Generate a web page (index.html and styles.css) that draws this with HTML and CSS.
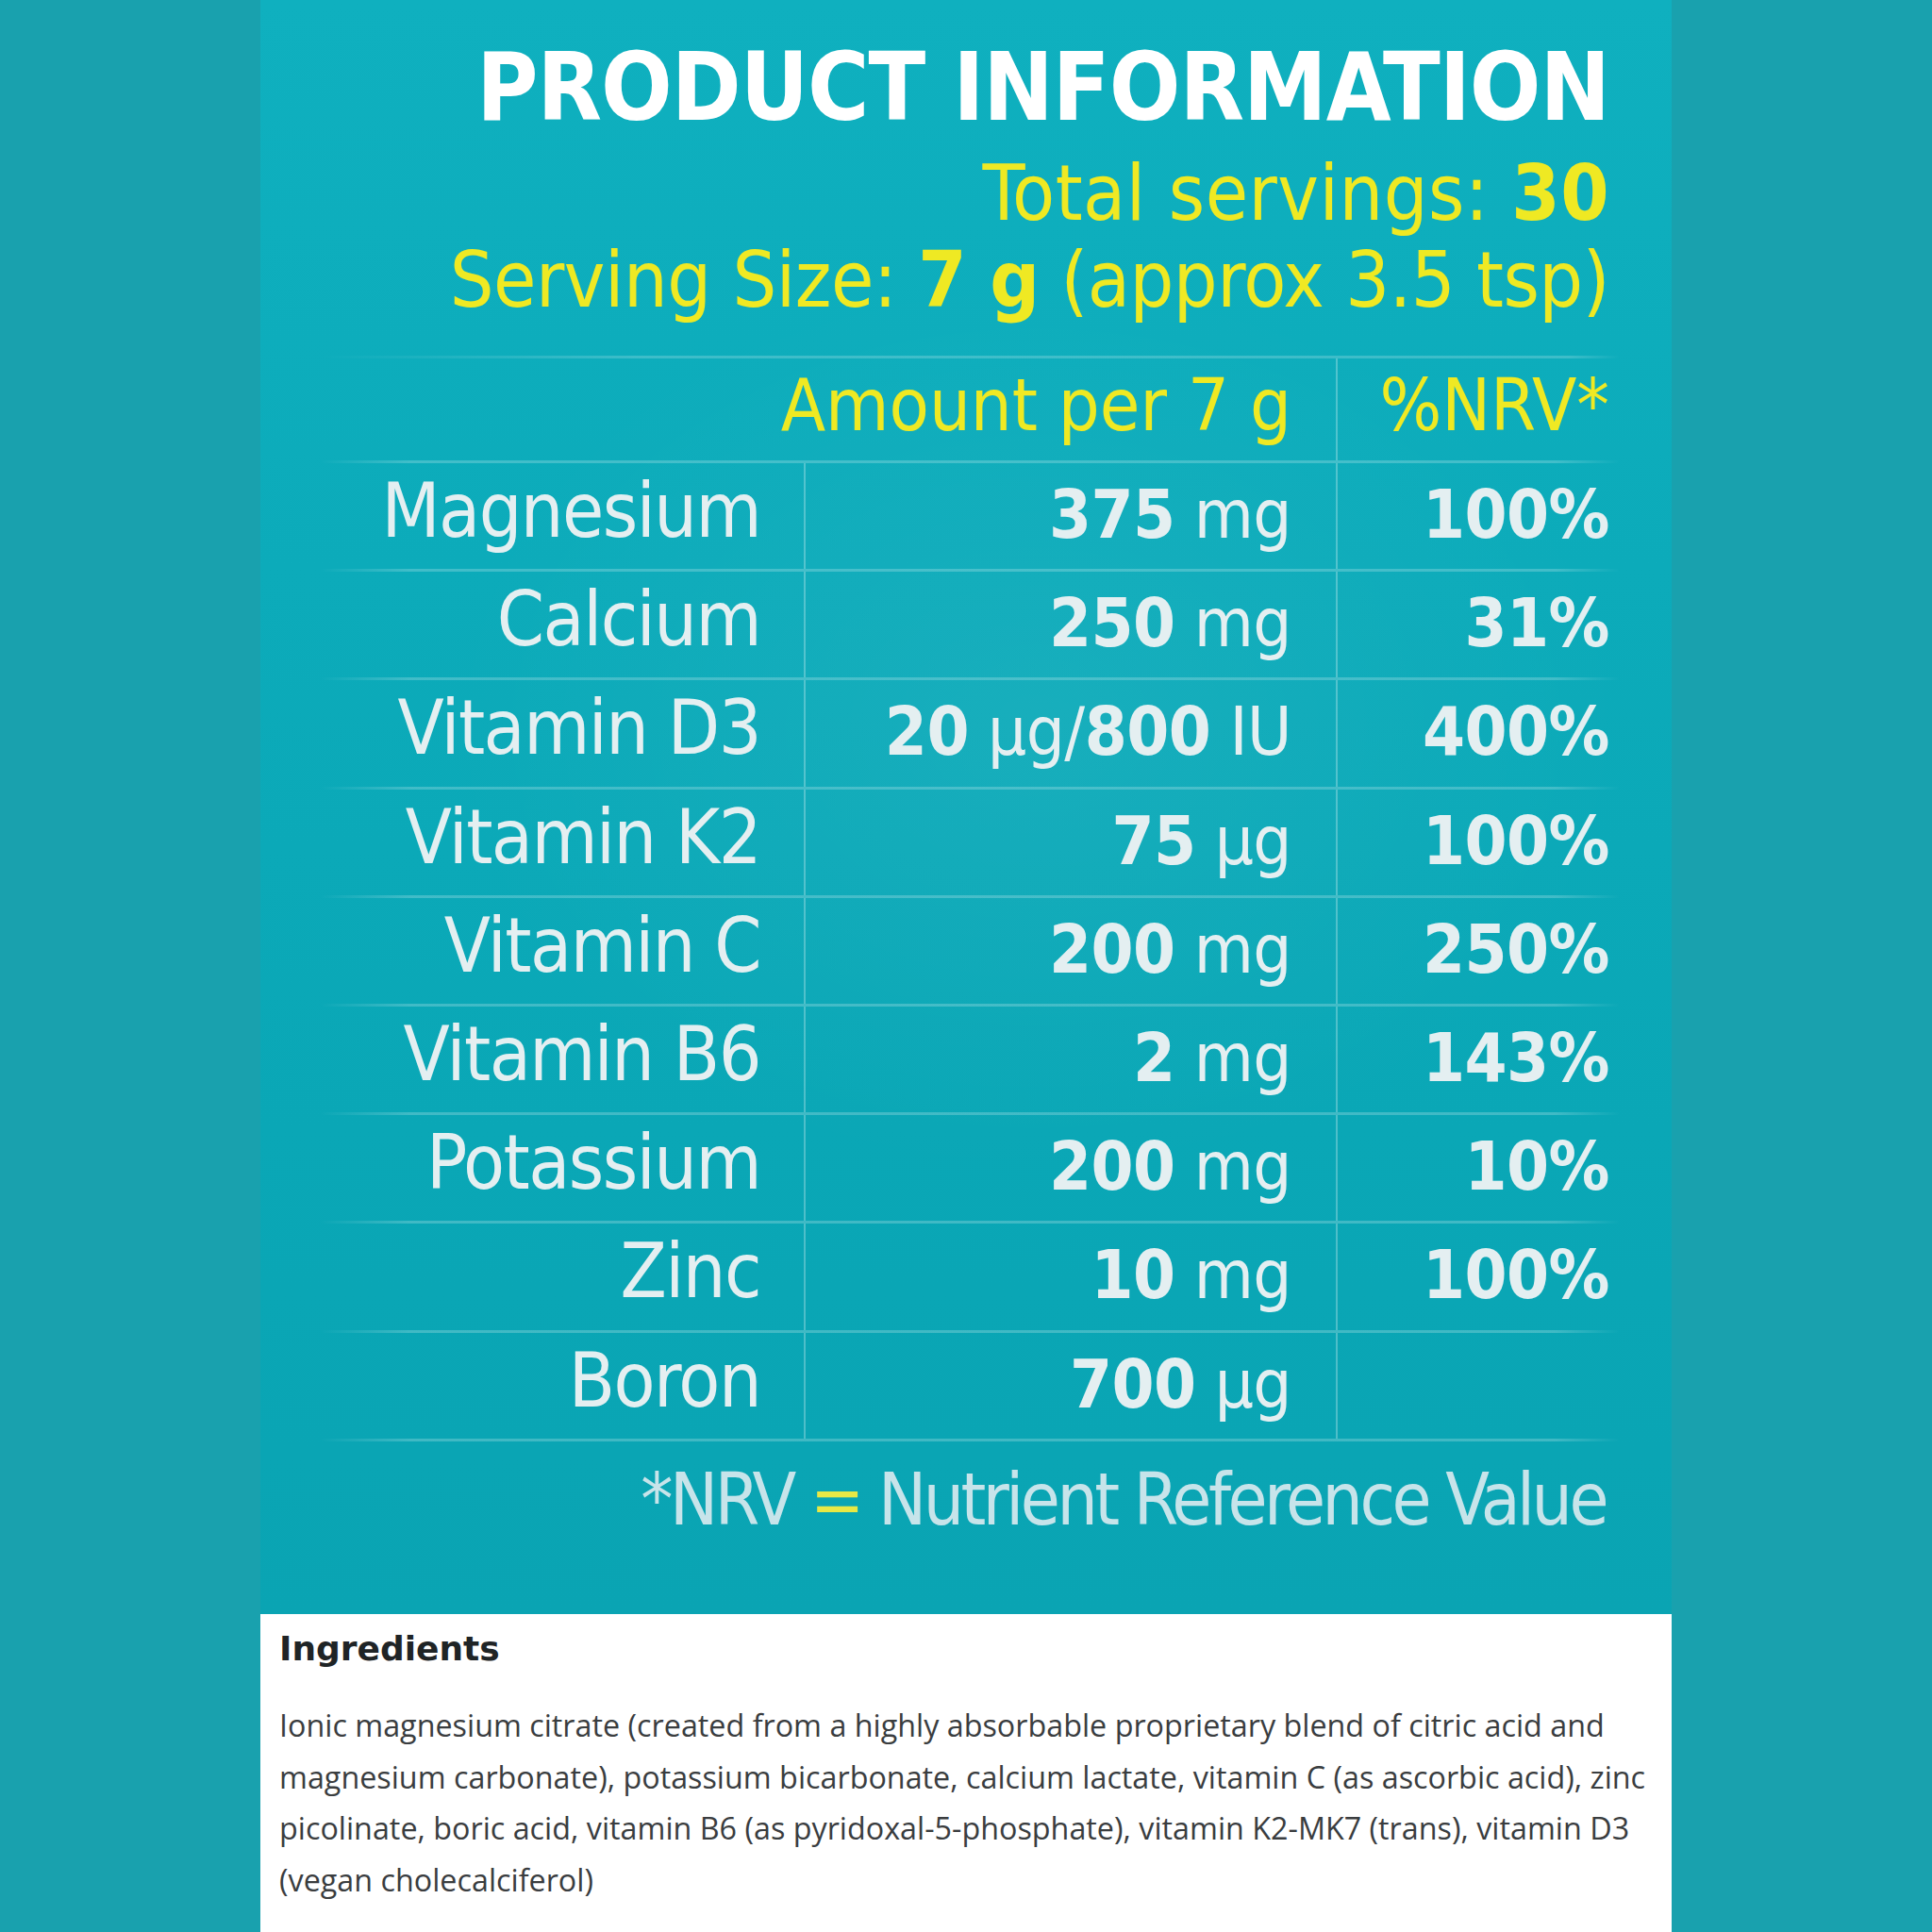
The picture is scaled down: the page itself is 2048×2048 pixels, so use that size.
FILE: index.html
```html
<!DOCTYPE html>
<html lang="en">
<head>
<meta charset="utf-8">
<title>Product Information</title>
<link rel="stylesheet" href="styles.css">
</head>
<body>
<div class="page">
  <div class="panel">
    <section class="hero">
      <h1 class="title">PRODUCT INFORMATION</h1>
      <div class="servings">
        <p class="serv-line">Total servings: <b>30</b></p>
        <p class="serv-line">Serving Size: <b>7 g</b> (approx 3.5 tsp)</p>
      </div>
      <div class="table">
        <div class="row head">
          <div class="cell amt hd span">Amount per 7 g</div>
          <div class="cell nrv hd">%NRV*</div>
        </div>
        <div class="row">
          <div class="cell name">Magnesium</div>
          <div class="cell amt line"><b>375</b> mg</div>
          <div class="cell nrv"><b>100%</b></div>
        </div>
        <div class="row">
          <div class="cell name">Calcium</div>
          <div class="cell amt line"><b>250</b> mg</div>
          <div class="cell nrv"><b>31%</b></div>
        </div>
        <div class="row">
          <div class="cell name">Vitamin D3</div>
          <div class="cell amt line"><b>20</b> µg/<b>800</b> IU</div>
          <div class="cell nrv"><b>400%</b></div>
        </div>
        <div class="row">
          <div class="cell name">Vitamin K2</div>
          <div class="cell amt line"><b>75</b> µg</div>
          <div class="cell nrv"><b>100%</b></div>
        </div>
        <div class="row">
          <div class="cell name">Vitamin C</div>
          <div class="cell amt line"><b>200</b> mg</div>
          <div class="cell nrv"><b>250%</b></div>
        </div>
        <div class="row">
          <div class="cell name">Vitamin B6</div>
          <div class="cell amt line"><b>2</b> mg</div>
          <div class="cell nrv"><b>143%</b></div>
        </div>
        <div class="row">
          <div class="cell name">Potassium</div>
          <div class="cell amt line"><b>200</b> mg</div>
          <div class="cell nrv"><b>10%</b></div>
        </div>
        <div class="row">
          <div class="cell name">Zinc</div>
          <div class="cell amt line"><b>10</b> mg</div>
          <div class="cell nrv"><b>100%</b></div>
        </div>
        <div class="row">
          <div class="cell name">Boron</div>
          <div class="cell amt line"><b>700</b> µg</div>
          <div class="cell nrv"></div>
        </div>
      </div>
      <p class="note">*NRV <span class="eq">=</span> Nutrient Reference Value</p>
    </section>
    <section class="ingredients">
      <h2 class="ing-title">Ingredients</h2>
      <p class="ing-text">Ionic magnesium citrate (created from a highly absorbable proprietary blend of citric acid and magnesium carbonate), potassium bicarbonate, calcium lactate, vitamin C (as ascorbic acid), zinc picolinate, boric acid, vitamin B6 (as pyridoxal-5-phosphate), vitamin K2-MK7 (trans), vitamin D3 (vegan cholecalciferol)</p>
    </section>
  </div>
</div>
</body>
</html>
```

FILE: styles.css
```css
* { box-sizing: border-box; }

html, body {
  margin: 0;
  padding: 0;
}

body {
  background: #19a1ae;
  width: 2048px;
  height: 2048px;
  overflow: hidden;
}

.page {
  width: 2048px;
  height: 2048px;
  padding-left: 276px;
}

.panel {
  width: 1496px;
  height: 2048px;
  display: flex;
  flex-direction: column;
}

.hero {
  height: 1711px;
  padding: 43px 56px 0 64px;
  background:
    radial-gradient(ellipse 60% 40% at 55% 45%, rgba(255,255,255,0.05), rgba(255,255,255,0) 70%),
    linear-gradient(180deg, #0fb0bf 0%, #0cabba 35%, #0aa7b6 70%, #0aa4b3 100%);
  font-family: "DejaVu Sans Condensed", "DejaVu Sans", sans-serif;
}

.title {
  margin: 0;
  padding-right: 10px;
  text-align: right;
  font-size: 99px;
  line-height: 99px;
  font-weight: 700;
  color: #ffffff;
  letter-spacing: -1px;
}

.servings {
  margin-top: 17px;
  padding-right: 10px;
  text-align: right;
  color: #efe923;
}

.serv-line {
  margin: 0;
  font-size: 82px;
  line-height: 92px;
  font-weight: 400;
  letter-spacing: -0.5px;
}

.serv-line:first-child { letter-spacing: 0.5px; }

.serv-line b { font-weight: 700; }

.table {
  margin-top: 34px;
  border-top: 3px solid;
  border-image: linear-gradient(90deg, rgba(255,255,255,0) 0%, rgba(255,255,255,0.2) 25%, rgba(255,255,255,0.2) 96%, rgba(255,255,255,0) 100%) 1;
}

.row {
  display: grid;
  grid-template-columns: 512px 564px 300px;
  height: 115.2px;
  border-bottom: 3px solid;
  border-image: linear-gradient(90deg, rgba(255,255,255,0) 0%, rgba(255,255,255,0.22) 7%, rgba(255,255,255,0.22) 95%, rgba(255,255,255,0) 100%) 1;
}

.row.head {
  height: 111px;
}

.cell {
  text-align: right;
  color: #e4eff1;
  white-space: nowrap;
}

.cell.name {
  padding: 11px 46px 0 0;
  font-size: 80px;
  line-height: 80px;
  letter-spacing: -1.5px;
}

.cell.amt {
  padding: 18px 47px 0 0;
  font-size: 72px;
  line-height: 72px;
  letter-spacing: -0.5px;
}

.cell.span {
  grid-column: 1 / 3;
}

.cell.amt.line {
  border-left: 2px solid rgba(255,255,255,0.28);
}

.cell.nrv {
  padding: 18px 10px 0 0;
  font-size: 72px;
  line-height: 72px;
  letter-spacing: -0.5px;
  border-left: 2px solid rgba(255,255,255,0.28);
}

.cell b { font-weight: 700; }

.cell.hd {
  color: #efe923;
  padding-top: 12px;
  font-size: 77px;
  line-height: 76px;
  letter-spacing: 0;
}

.note {
  margin: 20px 0 0;
  padding-right: 14px;
  text-align: right;
  font-family: "DejaVu Sans Condensed", "DejaVu Sans", sans-serif;
  font-size: 76px;
  line-height: 84px;
  letter-spacing: -3.5px;
  color: #c7e4ea;
}

.note .eq { color: #e8e845; }

.ingredients {
  flex: 1;
  background: #ffffff;
  padding: 19px 2px 0 20px;
}

.ing-title {
  margin: 0;
  font-family: "DejaVu Sans", sans-serif;
  font-weight: 700;
  font-size: 36px;
  line-height: 36px;
  color: #1f2426;
}

.ing-text {
  margin: 35px 0 0;
  font-family: "Open Sans", Lato, sans-serif;
  font-size: 32.3px;
  line-height: 54.5px;
  color: #3a3d3f;
}
```
